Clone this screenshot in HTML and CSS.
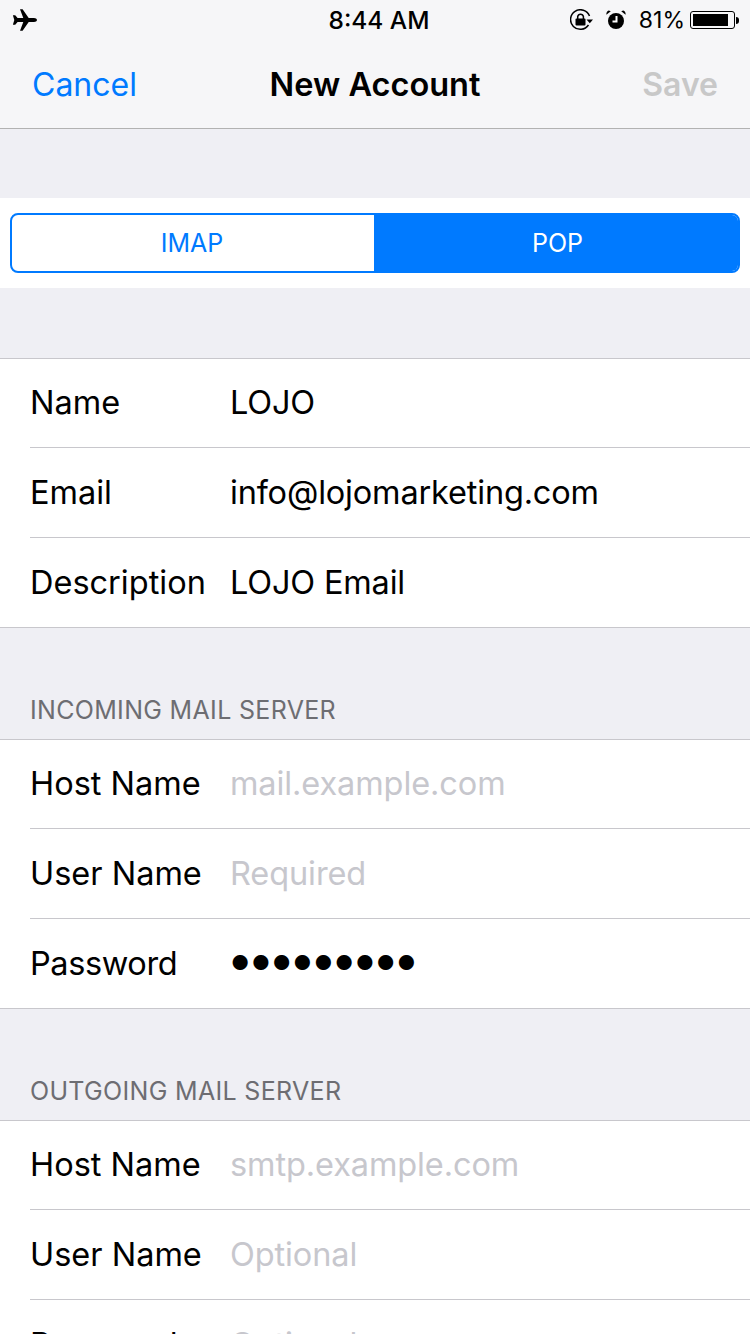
FILE: index.html
```html
<!DOCTYPE html>
<html lang="en">
<head>
    <meta charset="UTF-8">
    <meta name="viewport" content="width=device-width, initial-scale=1.0">
    <title>New Account</title>
    <link rel="stylesheet" href="styles.css">
</head>
<body>
    <div class="screen">
        <header class="top-bar">
            <div class="status-bar">
                <svg class="icon-plane" width="26" height="24" viewBox="0 0 26 24">
                    <path d="M25 12c0-1.300-1.500-2-3-2h-5.300L10.600 1.200 8 1.200l3.300 8.800H5.600L3.200 7.200H.9L2.300 12 .9 16.800h2.300l2.400-2.800h5.700L8 22.800h2.600L16.700 14H22c1.500 0 3-.7 3-2z"/>
                </svg>
                <div class="status-time">8:44 AM</div>
                <div class="status-right">
                    <svg class="icon-lock" width="24" height="22" viewBox="0 0 24 22">
                        <path class="ring" d="M19.500 7A9.800 9.800 0 1 0 18.500 16"/>
                        <path d="M16.500 10.500h6.500l-3.200 3.800z"/>
                        <rect x="5.500" y="9.500" width="10" height="7" rx="1"/>
                        <path class="ring" d="M7.700 10V7.500a2.900 2.900 0 0 1 5.700 0V10"/>
                    </svg>
                    <svg class="icon-alarm" width="20" height="20" viewBox="0 0 20 20">
                        <circle cx="10" cy="11" r="8"/>
                        <path class="hands" d="M10.500 6v5.500H6.500"/>
                        <path d="M.4 4.800 4.800 1.200 2.800.6C1.200.8.100 3 .4 4.800zM19.600 4.800 15.200 1.200 17.200.6c1.600.2 2.700 2.400 2.400 4.200z"/>
                    </svg>
                    <span class="battery-pct">81%</span>
                    <div class="battery">
                        <div class="battery-body"><div class="battery-fill"></div></div>
                        <div class="battery-tip"></div>
                    </div>
                </div>
            </div>
            <nav class="nav-bar">
                <span class="nav-cancel">Cancel</span>
                <span class="nav-title">New Account</span>
                <span class="nav-save">Save</span>
            </nav>
        </header>

        <div class="segment-wrap">
            <div class="segment">
                <div class="segment-item first-item">IMAP</div>
                <div class="segment-item active">POP</div>
            </div>
        </div>

        <section class="group first-group">
            <div class="row"><span class="row-label">Name</span><span class="row-value">LOJO</span></div>
            <div class="row"><span class="row-label">Email</span><span class="row-value">info@lojomarketing.com</span></div>
            <div class="row"><span class="row-label">Description</span><span class="row-value">LOJO Email</span></div>
        </section>

        <h2 class="section-title">INCOMING MAIL SERVER</h2>
        <section class="group">
            <div class="row"><span class="row-label">Host Name</span><span class="row-value placeholder">mail.example.com</span></div>
            <div class="row"><span class="row-label">User Name</span><span class="row-value placeholder">Required</span></div>
            <div class="row"><span class="row-label tight">Password</span><span class="row-value dots">●●●●●●●●●</span></div>
        </section>

        <h2 class="section-title">OUTGOING MAIL SERVER</h2>
        <section class="group">
            <div class="row"><span class="row-label">Host Name</span><span class="row-value placeholder">smtp.example.com</span></div>
            <div class="row"><span class="row-label">User Name</span><span class="row-value placeholder">Optional</span></div>
            <div class="row"><span class="row-label tight">Password</span><span class="row-value placeholder">Optional</span></div>
        </section>
    </div>
</body>
</html>
```

FILE: styles.css
```css
body {
    margin: 0;
    font-family: Inter, "Liberation Sans", sans-serif;
    background-color: #efeff4;
}

.screen {
    width: 750px;
    height: 1334px;
    overflow: hidden;
    color: #000;
}

.top-bar {
    height: 128px;
    background-color: #f6f6f8;
    border-bottom: 1px solid #b2b2b2;
}

.status-bar {
    height: 40px;
    position: relative;
    display: flex;
    align-items: center;
    justify-content: space-between;
    padding: 0 11px 0 12px;
}

.status-time {
    position: absolute;
    left: 8px;
    right: 0;
    text-align: center;
    font-size: 24.400px;
    font-weight: 500;
}

.status-right {
    display: flex;
    align-items: center;
    gap: 13px;
}

.icon-lock {
    margin-right: -1px;
}

.icon-lock .ring {
    fill: none;
    stroke: #000;
    stroke-width: 1.500;
}

.icon-alarm .hands {
    fill: none;
    stroke: #fff;
    stroke-width: 2;
}

.battery-pct {
    font-size: 23px;
    margin-right: -8px;
}

.battery {
    display: flex;
    align-items: center;
}

.battery-body {
    width: 45px;
    height: 18px;
    box-sizing: border-box;
    padding: 2px;
    border: 1px solid #000;
    border-radius: 3px;
}

.battery-fill {
    width: 35px;
    height: 100%;
    background-color: #000;
}

.battery-tip {
    width: 3px;
    height: 7px;
    margin-left: 1px;
    background-color: #000;
    border-radius: 0 3px 3px 0;
}

.nav-bar {
    height: 88px;
    display: flex;
    align-items: center;
    justify-content: space-between;
    padding: 0 32px;
    position: relative;
    font-size: 32px;
}

.nav-cancel {
    color: #007aff;
}

.nav-title {
    position: absolute;
    left: 0;
    right: 0;
    text-align: center;
    font-weight: 600;
    font-size: 32.500px;
}

.nav-save {
    color: #c8c8c8;
    font-weight: 600;
}

.segment-wrap {
    margin-top: 69px;
    padding: 15px 10px;
    background-color: #fff;
}

.segment {
    height: 60px;
    box-sizing: border-box;
    display: flex;
    border: 2px solid #007aff;
    border-radius: 8px;
    overflow: hidden;
    font-size: 25px;
}

.segment-item {
    flex: 1;
    display: flex;
    align-items: center;
    justify-content: center;
    color: #007aff;
}

.first-item {
    flex: none;
    width: 362px;
    padding-right: 2px;
    box-sizing: border-box;
}

.segment-item.active {
    background-color: #007aff;
    color: #fff;
    padding-left: 3px;
}

.group {
    background-color: #fff;
    border-top: 1px solid #c8c7cc;
    border-bottom: 1px solid #c8c7cc;
}

.first-group {
    margin-top: 70px;
}

.row {
    height: 90px;
    box-sizing: border-box;
    margin-left: 30px;
    padding-bottom: 1px;
    display: flex;
    align-items: center;
    border-bottom: 1px solid #c8c7cc;
    font-size: 32.500px;
}

.row:first-child {
    height: 89px;
    padding-bottom: 2px;
}

.row:last-child {
    height: 89px;
    border-bottom: 0;
}

.row-label {
    width: 200px;
    flex-shrink: 0;
}

.row-label.tight {
    letter-spacing: -0.400px;
}

.row-value {
    letter-spacing: -0.180px;
}

.placeholder {
    color: #c7c7cd;
    letter-spacing: -0.100px;
}

.row-value.dots {
    font-size: 20px;
    letter-spacing: 2.500px;
    padding-left: 1px;
}

.section-title {
    margin: 0;
    height: 111px;
    box-sizing: border-box;
    padding: 67px 0 0 30px;
    font-size: 25px;
    line-height: 30px;
    letter-spacing: 0.320px;
    font-weight: 400;
    color: #6d6d72;
}
```
